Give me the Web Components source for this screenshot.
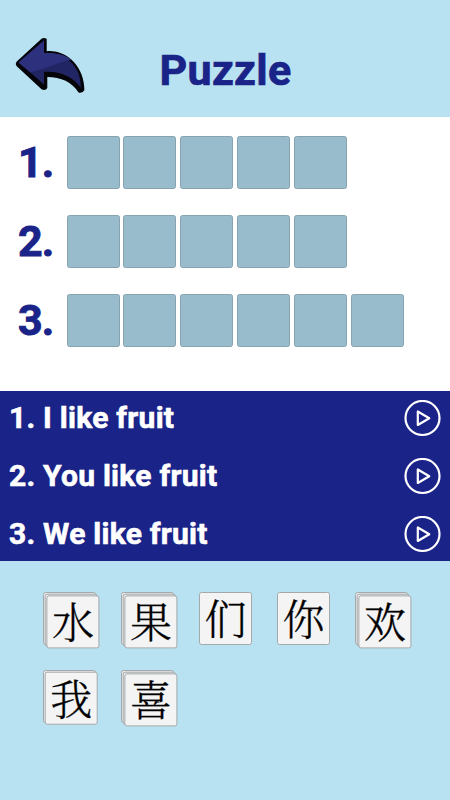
<!DOCTYPE html>
<html lang="en">
<head>
<meta charset="utf-8">
<title>Puzzle</title>
<style>
body {
    margin: 0;
    font-family: Roboto, "Liberation Sans", sans-serif;
    --navy: #1a2387;
    --sky: #b8e2f2;
}
</style>
</head>
<body>
<puzzle-app>
    <puzzle-header slot="header">Puzzle</puzzle-header>
    <answer-row slot="answers" tiles="5">1.</answer-row>
    <answer-row slot="answers" tiles="5">2.</answer-row>
    <answer-row slot="answers" tiles="6">3.</answer-row>
    <clue-row slot="clues">1. I like fruit</clue-row>
    <clue-row slot="clues">2. You like fruit</clue-row>
    <clue-row slot="clues">3. We like fruit</clue-row>
    <word-card slot="cards" stack="3">水</word-card>
    <word-card slot="cards" stack="3">果</word-card>
    <word-card slot="cards" stack="1">们</word-card>
    <word-card slot="cards" stack="1">你</word-card>
    <word-card slot="cards" stack="3">欢</word-card>
    <word-card slot="cards" stack="2">我</word-card>
    <word-card slot="cards" stack="3">喜</word-card>
</puzzle-app>

<script>
const app_template = document.createElement("template");
app_template.innerHTML = `
<style>
:host {
    display: flex;
    flex-direction: column;
    width: 450px;
    height: 800px;
    overflow: hidden;
    background: #fff;
}
.answers {
    display: flex;
    flex-direction: column;
    row-gap: 26px;
    height: 274px;
    box-sizing: border-box;
    padding: 18.5px 0 0 18px;
}
.clues {
    display: flex;
    flex-direction: column;
    height: 170px;
    box-sizing: border-box;
    padding: 0 9px;
    justify-content: space-between;
    background: var(--navy);
}
.cards {
    flex: 1;
    display: grid;
    grid-template-columns: repeat(5, 53px);
    grid-auto-rows: 53px;
    gap: 25px;
    padding: 31px 0 0 43px;
    background: var(--sky);
}
</style>
<slot name="header"></slot>
<div class="answers"><slot name="answers"></slot></div>
<div class="clues"><slot name="clues"></slot></div>
<div class="cards"><slot name="cards"></slot></div>
`;

const header_template = document.createElement("template");
header_template.innerHTML = `
<style>
:host {
    display: grid;
    grid-template-columns: 86px 1fr 85px;
    align-items: center;
    height: 117px;
    box-sizing: border-box;
    padding-top: 23px;
    background: var(--sky);
}
svg {
    display: block;
    margin-left: 14px;
    margin-top: -8px;
}
h1 {
    margin: 0;
    text-align: center;
    font-size: 43px;
    line-height: 50px;
    letter-spacing: 0.3px;
    color: var(--navy);
    -webkit-text-stroke: 0.7px var(--navy);
}
</style>
<svg width="72" height="58" viewBox="14 37 72 58">
    <path d="M41.5 38.7 Q43.5 37.3 46.7 38.8 V51.2 C67 49.500 84.500 67 84.400 90 Q83 93.500 78.500 92.500 C72 82 61 77 47.300 77 V88 Q45.500 91 41.500 89.200 L16.500 66 Q15 64 16.500 61.800 Z" fill="#050509"/>
    <path d="M44 40.500 L18.500 62.500 L31 73 L44 84.500 V71.800 C62 70.500 74 78 80.800 87.500 C81.500 68 67 51.800 44 53.200 Z" fill="#222564"/>
    <path d="M44 40.500 L18.500 62.500 L30.500 72.500 C43 69 59 62.500 71.500 59.500 C62 53.500 53 52.800 44 53.200 Z" fill="#2d307d"/>
</svg>
<h1><slot></slot></h1>
`;

const answer_template = document.createElement("template");
answer_template.innerHTML = `
<style>
:host {
    display: flex;
    height: 53px;
    color: var(--navy);
}
.number {
    width: 48.5px;
    font-size: 43px;
    font-weight: 700;
    line-height: 52px;
    letter-spacing: -1px;
    -webkit-text-stroke: 0.9px var(--navy);
}
.tiles {
    display: flex;
    column-gap: 3.9px;
}
.tile {
    width: 53px;
    height: 53px;
    box-sizing: border-box;
    border: 1px solid #86a3af;
    border-radius: 2.5px;
    background: #98bccc;
}
</style>
<div class="number"><slot></slot></div>
<div class="tiles"></div>
`;

const clue_template = document.createElement("template");
clue_template.innerHTML = `
<style>
:host {
    display: flex;
    align-items: center;
    justify-content: space-between;
    height: 54px;
    color: #fff;
    font-size: 30px;
    font-weight: 700;
    letter-spacing: 0.25px;
    -webkit-text-stroke: 0.6px #fff;
}
span {
    padding-bottom: 2px;
}
svg {
    display: block;
}
</style>
<span><slot></slot></span>
<svg width="37" height="37" viewBox="0 0 37 37" fill="none" stroke="#fff" stroke-width="2.2">
    <circle cx="18.5" cy="18" r="17"/>
    <path d="M13.8 11.5 V25 L25.3 18.2 Z" stroke-linejoin="round"/>
</svg>
`;

const card_template = document.createElement("template");
card_template.innerHTML = `
<style>
:host {
    display: grid;
    width: 53px;
    height: 53px;
}
.sheet {
    grid-area: 1 / 1;
    width: 53px;
    height: 53px;
    box-sizing: border-box;
    border: 1px solid #a4a8aa;
    border-radius: 2.5px;
    background: #ececec;
}
.face {
    background: #f4f4f4;
    color: #000;
    font: 300 42px/48px "Noto Serif CJK SC", "Noto Sans CJK SC", sans-serif;
    text-align: center;
    -webkit-text-stroke: 0.3px #000;
}
</style>
`;

class PuzzleApp extends HTMLElement {
    constructor() {
        super();
        this.attachShadow({ mode: "open" }).appendChild(app_template.content.cloneNode(true));
    }
}

class PuzzleHeader extends HTMLElement {
    constructor() {
        super();
        this.attachShadow({ mode: "open" }).appendChild(header_template.content.cloneNode(true));
    }
}

class AnswerRow extends HTMLElement {
    constructor() {
        super();
        this.attachShadow({ mode: "open" }).appendChild(answer_template.content.cloneNode(true));
    }

    connectedCallback() {
        const tiles = this.shadowRoot.querySelector(".tiles");
        tiles.innerHTML = `<div class="tile"></div>`.repeat(Number(this.getAttribute("tiles")));
    }
}

class ClueRow extends HTMLElement {
    constructor() {
        super();
        this.attachShadow({ mode: "open" }).appendChild(clue_template.content.cloneNode(true));
    }
}

class WordCard extends HTMLElement {
    constructor() {
        super();
        this.attachShadow({ mode: "open" }).appendChild(card_template.content.cloneNode(true));
    }

    // The last sheet is the face, the ones under it show how many copies are left.
    connectedCallback() {
        const stack = Number(this.getAttribute("stack"));
        for (let i = 0; i < stack; i++) {
            const sheet = document.createElement("div");
            sheet.className = "sheet";
            sheet.style.transform = `translate(${i * 1.7}px, ${i * 1.7}px)`;
            if (i === stack - 1) {
                sheet.classList.add("face");
                sheet.appendChild(document.createElement("slot"));
            }
            this.shadowRoot.appendChild(sheet);
        }
    }
}

customElements.define("puzzle-app", PuzzleApp);
customElements.define("puzzle-header", PuzzleHeader);
customElements.define("answer-row", AnswerRow);
customElements.define("clue-row", ClueRow);
customElements.define("word-card", WordCard);
</script>
</body>
</html>
